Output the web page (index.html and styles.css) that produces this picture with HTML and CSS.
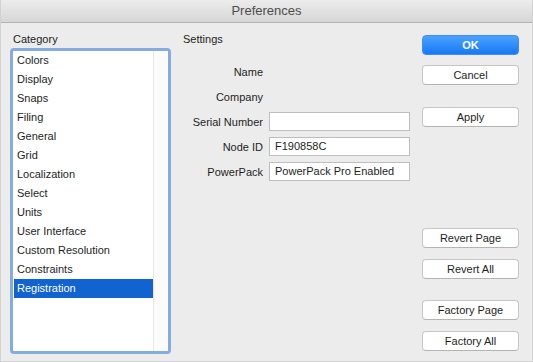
FILE: index.html
```html
<!DOCTYPE html>
<html lang="en">
<head>
  <meta charset="UTF-8">
  <title>Preferences</title>
  <link rel="stylesheet" href="styles.css">
</head>
<body>
  <div class="window">
    <div class="titlebar">Preferences</div>

    <div class="content">
      <div class="category-col">
        <div class="group-label">Category</div>
        <div class="list-box">
          <ul class="list">
            <li>Colors</li>
            <li>Display</li>
            <li>Snaps</li>
            <li>Filing</li>
            <li>General</li>
            <li>Grid</li>
            <li>Localization</li>
            <li>Select</li>
            <li>Units</li>
            <li>User Interface</li>
            <li>Custom Resolution</li>
            <li>Constraints</li>
            <li class="selected">Registration</li>
          </ul>
          <div class="scroll-track"></div>
        </div>
      </div>

      <div class="settings-col">
        <div class="group-label">Settings</div>
        <div class="form">
          <div class="form-row">
            <label class="form-label">Name</label>
          </div>
          <div class="form-row">
            <label class="form-label">Company</label>
          </div>
          <div class="form-row">
            <label class="form-label">Serial Number</label>
            <div class="field"></div>
          </div>
          <div class="form-row">
            <label class="form-label">Node ID</label>
            <div class="field">F190858C</div>
          </div>
          <div class="form-row">
            <label class="form-label">PowerPack</label>
            <div class="field">PowerPack Pro Enabled</div>
          </div>
        </div>
      </div>

      <div class="button-col">
        <button class="btn btn-default">OK</button>
        <button class="btn btn-cancel">Cancel</button>
        <button class="btn btn-apply">Apply</button>
        <button class="btn btn-revert-page">Revert Page</button>
        <button class="btn btn-pair">Revert All</button>
        <button class="btn btn-factory-page">Factory Page</button>
        <button class="btn btn-pair">Factory All</button>
      </div>
    </div>
  </div>
</body>
</html>
```

FILE: styles.css
```css
* {
  margin: 0;
  padding: 0;
  box-sizing: border-box;
}

body {
  font-family: 'Liberation Sans', Arial, sans-serif;
  font-size: 11px;
  color: #1e1e1e;
  background: #ececec;
  width: 533px;
  height: 362px;
  overflow: hidden;
}

.window {
  width: 533px;
  height: 362px;
  display: flex;
  flex-direction: column;
  background: #ececec;
  border-left: 1px solid #d2d2d2;
  border-right: 1px solid #d2d2d2;
  border-bottom: 1px solid #d2d2d2;
}

.titlebar {
  height: 23px;
  flex: none;
  text-align: center;
  font-size: 13px;
  line-height: 22px;
  color: #4d4d4d;
  background: linear-gradient(#ececec, #d6d6d6);
  border-bottom: 1px solid #b4b4b4;
}

.content {
  flex: 1;
  display: flex;
  padding-left: 9px;
}

.group-label {
  height: 14px;
  line-height: 14px;
  margin-top: 9px;
}

/* category list */

.category-col {
  width: 161px;
}

.category-col .group-label {
  padding-left: 3px;
}

.list-box {
  margin-top: 2px;
  height: 306px;
  display: flex;
  border: 3px solid #85acdf;
  border-radius: 4px;
  background: #ffffff;
}

.list {
  flex: 1;
  list-style: none;
  padding-left: 1px;
}

.list li {
  height: 19px;
  line-height: 19px;
  padding-left: 3px;
  white-space: nowrap;
}

.list li.selected {
  background: #1163d0;
  color: #ffffff;
}

.scroll-track {
  width: 15px;
  background: #fbfbfb;
  border-left: 1px solid #e8e8e8;
}

/* settings form */

.settings-col {
  width: 227px;
  margin-left: 12px;
}

.form {
  margin-top: 16px;
  display: flex;
  flex-direction: column;
  gap: 6px;
}

.form-row {
  display: flex;
  align-items: center;
  gap: 6px;
  height: 19px;
}

.form-label {
  width: 80px;
  text-align: right;
  white-space: nowrap;
}

.field {
  width: 141px;
  height: 19px;
  line-height: 17px;
  padding-left: 5px;
  background: #ffffff;
  border: 1px solid #bebebe;
  white-space: nowrap;
}

/* buttons */

.button-col {
  width: 97px;
  margin-left: 12px;
  padding-top: 12px;
  display: flex;
  flex-direction: column;
}

.btn {
  height: 20px;
  flex: none;
  font-family: inherit;
  font-size: 11px;
  color: #1e1e1e;
  background: #ffffff;
  border: 1px solid #c6c6c6;
  border-bottom-color: #b4b4b4;
  border-radius: 4px;
}

.btn-default {
  background: linear-gradient(#4aa2fc, #1878f5);
  border-color: #3f8ef0;
  color: #ffffff;
  font-weight: bold;
}

.btn-cancel {
  margin-top: 10px;
}

.btn-apply {
  margin-top: 22px;
}

.btn-revert-page {
  margin-top: 101px;
}

.btn-factory-page {
  margin-top: 21px;
}

.btn-pair {
  margin-top: 11px;
}
```
